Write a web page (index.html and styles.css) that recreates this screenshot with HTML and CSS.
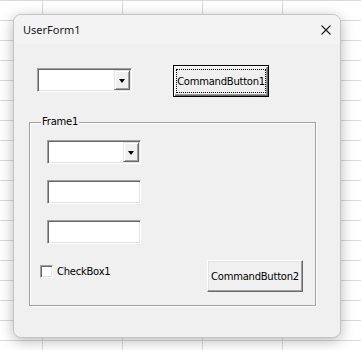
FILE: index.html
```html
<!DOCTYPE html>
<html lang="en">
<head>
    <meta charset="UTF-8">
    <meta name="viewport" content="width=device-width, initial-scale=1.0">
    <title>UserForm1</title>
    <link rel="stylesheet" href="styles.css">
</head>
<body>
    <div class="userform">
        <div class="titlebar">
            <span class="title">UserForm1</span>
            <span class="close" aria-label="Close">
                <svg width="10" height="10" viewBox="0 0 10 10">
                    <path d="M0.5 0.5 L9.5 9.5 M9.5 0.5 L0.5 9.5" stroke="#1a1a1a" stroke-width="1.1" fill="none"/>
                </svg>
            </span>
        </div>

        <div class="form-body">
            <div class="top-row">
                <div class="combo">
                    <span class="drop"><span class="arrow"></span></span>
                </div>
                <button class="cmd cmd-default"><span class="focus">CommandButton1</span></button>
            </div>

            <div class="frame">
                <span class="frame-caption">Frame1</span>
                <div class="frame-fields">
                    <div class="combo">
                        <span class="drop"><span class="arrow"></span></span>
                    </div>
                    <div class="textbox"></div>
                    <div class="textbox"></div>
                </div>
                <div class="frame-bottom">
                    <label class="check"><span class="check-box"></span>CheckBox1</label>
                    <button class="cmd">CommandButton2</button>
                </div>
            </div>
        </div>
    </div>
</body>
</html>
```

FILE: styles.css
```css
body {
    margin: 0;
    padding: 14px 0 0 13px;
    width: 361px;
    height: 350px;
    box-sizing: border-box;
    overflow: hidden;
    background-color: #ffffff;
    background-image:
        linear-gradient(to right, #dadada 1px, transparent 1px),
        linear-gradient(to bottom, #dadada 1px, transparent 1px);
    background-size: 80px 100%, 100% 20px;
    background-position: 42px 0, 0 0;
    font-family: 'DejaVu Sans', sans-serif;
    font-size: 10px;
    letter-spacing: -0.25px;
    color: #000;
}

.userform {
    width: 328px;
    height: 324px;
    box-sizing: border-box;
    border: 1px solid #c4c4c4;
    border-radius: 8px;
    background-color: #f0f0f0;
    overflow: hidden;
    box-shadow: 0 3px 14px rgba(0, 0, 0, 0.28);
}

.titlebar {
    height: 29px;
    display: flex;
    align-items: center;
    padding-left: 9px;
    background-color: #f3f3f3;
}

.title {
    font-family: 'Noto Sans', sans-serif;
    font-size: 11px;
    letter-spacing: 0;
    color: #1a1a1a;
}

.close {
    margin-left: auto;
    margin-right: 9px;
    width: 10px;
    height: 10px;
    display: flex;
}

.form-body {
    padding-left: 15px;
}

.top-row {
    display: flex;
    align-items: flex-start;
    margin-left: 8px;
    padding-top: 21px;
}

.top-row .combo {
    margin-top: 3px;
    width: 95px;
}

.top-row .cmd {
    margin-left: 41px;
}

.combo,
.textbox {
    width: 94px;
    height: 24px;
    box-sizing: border-box;
    background-color: #fff;
    border: 1px solid;
    border-color: #a0a0a0 #fff #fff #a0a0a0;
    box-shadow: inset 1px 1px 0 #696969, inset -1px -1px 0 #e3e3e3;
}

.combo {
    display: flex;
    justify-content: flex-end;
    padding: 1px;
}

.drop {
    width: 16px;
    height: 20px;
    box-sizing: border-box;
    background-color: #f0f0f0;
    border: 1px solid;
    border-color: #e3e3e3 #696969 #696969 #e3e3e3;
    box-shadow: inset 1px 1px 0 #fff, inset -1px -1px 0 #a0a0a0;
    display: flex;
    justify-content: center;
    align-items: center;
}

.arrow {
    width: 0;
    height: 0;
    border-left: 3.5px solid transparent;
    border-right: 3.5px solid transparent;
    border-top: 4px solid #000;
    margin-top: 1px;
}

.cmd {
    width: 96px;
    height: 32px;
    box-sizing: border-box;
    padding: 0;
    font-family: 'DejaVu Sans', sans-serif;
    font-size: 10px;
    letter-spacing: -0.25px;
    color: #000;
    background-color: #f0f0f0;
    border: 1px solid;
    border-color: #fff #696969 #696969 #fff;
    box-shadow: inset -1px -1px 0 #a0a0a0, inset 1px 1px 0 #e3e3e3;
    display: flex;
    justify-content: center;
    align-items: center;
}

.cmd-default {
    border-color: #000;
    box-shadow: inset 1px 1px 0 #fff, inset -1px -1px 0 #696969, inset -2px -2px 0 #a0a0a0;
    padding: 3px;
}

.focus {
    flex: 1;
    align-self: stretch;
    border: 1px dotted #000;
    display: flex;
    justify-content: center;
    align-items: center;
}

.frame {
    position: relative;
    margin-top: 25px;
    width: 287px;
    height: 184px;
    box-sizing: border-box;
    border: 1px solid #a0a0a0;
    box-shadow: inset 1px 1px 0 #fff, 1px 1px 0 #fff;
    padding: 17px 12px 13px 10px;
}

.frame-caption {
    position: absolute;
    top: -8px;
    left: 11px;
    padding: 0 1px;
    line-height: 14px;
    background-color: #f0f0f0;
}

.frame-fields {
    display: flex;
    flex-direction: column;
    gap: 16px;
    margin-left: 7px;
}

.frame-bottom {
    display: flex;
    justify-content: space-between;
    align-items: flex-start;
    margin-top: 16px;
}

.check {
    display: flex;
    align-items: center;
    gap: 4px;
    margin-top: 5px;
    height: 13px;
}

.check-box {
    width: 13px;
    height: 13px;
    box-sizing: border-box;
    background-color: #fff;
    border: 1px solid;
    border-color: #a0a0a0 #fff #fff #a0a0a0;
    box-shadow: inset 1px 1px 0 #696969, inset -1px -1px 0 #e3e3e3;
}
```
